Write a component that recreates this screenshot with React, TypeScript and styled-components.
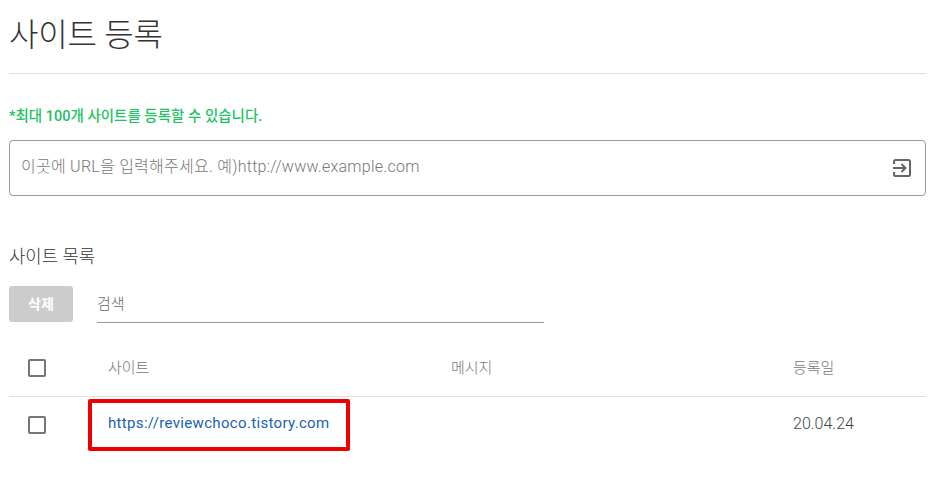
import styled, { createGlobalStyle } from 'styled-components';

const GlobalStyle = createGlobalStyle`
  html, body {
    margin: 0;
    padding: 0;
    background: #fff;
  }
  body {
    font-family: Roboto, 'Noto Sans CJK KR', sans-serif;
    color: #333;
  }
  * {
    box-sizing: border-box;
  }
`;

const Page = styled.div`
  width: 939px;
  height: 480px;
  padding: 0 13px 0 9px;
  overflow: hidden;
`;

const Title = styled.h1`
  margin: 0;
  height: 74px;
  padding-top: 13px;
  font-size: 32px;
  line-height: 44px;
  font-weight: 300;
  letter-spacing: -0.2px;
  color: #333;
  border-bottom: 1px solid #e0e0e0;
`;

const Notice = styled.p`
  margin: 33px 0 0;
  font-size: 14.5px;
  line-height: 20px;
  font-weight: 500;
  color: #1ec264;
`;

const UrlBox = styled.div`
  display: flex;
  align-items: center;
  justify-content: space-between;
  height: 56px;
  margin-top: 13px;
  padding: 0 12px 0 11px;
  border: 1px solid #999;
  border-radius: 4px;
`;

const UrlPlaceholder = styled.span`
  margin-top: -7px;
  font-size: 16px;
  font-weight: 300;
  letter-spacing: 0.26px;
  color: #777;
`;

const SectionTitle = styled.h2`
  margin: 50px 0 0;
  font-size: 17.8px;
  line-height: 22px;
  font-weight: 300;
  color: #333;
`;

const Toolbar = styled.div`
  display: flex;
  gap: 24px;
  margin-top: 18px;
  height: 37px;
`;

const DeleteButton = styled.button`
  width: 64px;
  height: 36px;
  padding: 0 0 2px;
  border: 0;
  border-radius: 3px;
  background: #ccc;
  color: #fff;
  font-family: inherit;
  font-size: 14px;
  font-weight: 700;
`;

const SearchField = styled.div`
  width: 447px;
  height: 37px;
  padding-top: 8px;
  border-bottom: 1px solid #999;
  font-size: 15px;
  line-height: 20px;
  font-weight: 300;
  color: #666;
`;

const Row = styled.div<{ $header?: boolean }>`
  display: grid;
  grid-template-columns: 99px 343px 342px 1fr;
  align-items: center;
  height: ${(p) => (p.$header ? '51px' : '54px')};
  margin-top: ${(p) => (p.$header ? '23px' : '0')};
  padding-bottom: ${(p) => (p.$header ? '7px' : '0')};
  border-bottom: ${(p) => (p.$header ? '1px solid #e0e0e0' : '0')};
`;

const CheckCell = styled.div<{ $body?: boolean }>`
  display: flex;
  padding-left: 19px;
  padding-top: ${(p) => (p.$body ? '2px' : '0')};
`;

const CheckBox = styled.span`
  display: block;
  width: 18px;
  height: 18px;
  border: 2px solid #757575;
  border-radius: 2px;
`;

const HeadCell = styled.div`
  font-size: 15px;
  line-height: 20px;
  font-weight: 300;
  color: #777;
`;

const LinkCell = styled.div`
  position: relative;
  margin-top: -2px;
  font-size: 15px;
  line-height: 20px;
  font-weight: 400;
  letter-spacing: 0.33px;
  color: #1a62ae;
`;

const Highlight = styled.span`
  position: absolute;
  left: -20px;
  top: -14px;
  width: 262px;
  height: 52px;
  border: 4px solid #ee0000;
  border-radius: 2px;
`;

const DateCell = styled.div`
  margin-top: -1px;
  font-size: 16px;
  line-height: 20px;
  font-weight: 300;
  color: #444;
`;

const EnterIcon = () => (
  <svg width="22" height="22" viewBox="0 0 22 22" fill="none" stroke="#666" strokeWidth="2">
    <path d="M3 7V4.500A1.500 1.500 0 0 1 4.500 3h13A1.500 1.500 0 0 1 19 4.500v13a1.500 1.500 0 0 1-1.500 1.500h-13A1.500 1.500 0 0 1 3 17.500V15" />
    <path d="M2 11h12M10.500 7l4 4-4 4" />
  </svg>
);

export default function App() {
  return (
    <>
      <GlobalStyle />
      <Page>
        <Title>사이트 등록</Title>
        <Notice>*최대 100개 사이트를 등록할 수 있습니다.</Notice>
        <UrlBox>
          <UrlPlaceholder>이곳에 URL을 입력해주세요. 예)http://www.example.com</UrlPlaceholder>
          <EnterIcon />
        </UrlBox>
        <SectionTitle>사이트 목록</SectionTitle>
        <Toolbar>
          <DeleteButton>삭제</DeleteButton>
          <SearchField>검색</SearchField>
        </Toolbar>
        <Row $header>
          <CheckCell>
            <CheckBox />
          </CheckCell>
          <HeadCell>사이트</HeadCell>
          <HeadCell>메시지</HeadCell>
          <HeadCell>등록일</HeadCell>
        </Row>
        <Row>
          <CheckCell $body>
            <CheckBox />
          </CheckCell>
          <LinkCell>
            https://reviewchoco.tistory.com
            <Highlight />
          </LinkCell>
          <div />
          <DateCell>20.04.24</DateCell>
        </Row>
      </Page>
    </>
  );
}
